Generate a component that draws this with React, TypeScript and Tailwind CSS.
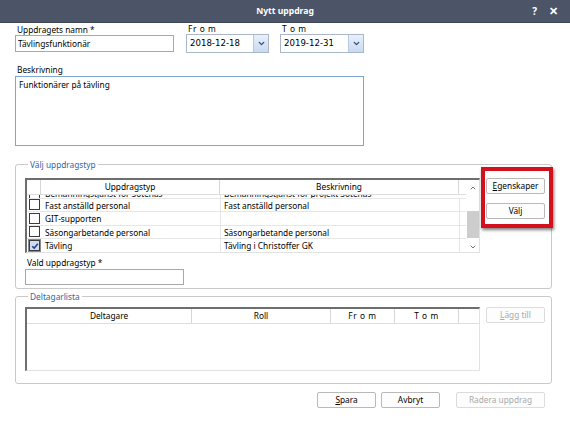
import { ChevronDown, ChevronUp } from "lucide-react";

// --- small building blocks ---

function Btn({ children, disabled, className = "" }: { children: React.ReactNode; disabled?: boolean; className?: string }) {
    return (
        <button
            className={`h-[16px] border rounded-[2px] flex items-center justify-center text-[8.3px] leading-none bg-[#fdfdfd] ${
                disabled ? "border-[#dcdcdc] text-[#a9a9a9]" : "border-[#b9b9b9] text-black"
            } ${className}`}
        >
            {children}
        </button>
    );
}

function DateField({ value }: { value: string }) {
    return (
        <div className="h-[19px] w-full border border-[#a9b7c9] bg-white flex items-center">
            <span className="flex-1 pl-[3px] text-[8.6px] font-['DejaVu_Sans']">{value}</span>
            <span className="w-[15px] h-[17px] bg-gradient-to-b from-[#e8f0fb] to-[#c9daf0] border-l border-[#b7c8de] flex items-center justify-center">
                <ChevronDown className="w-[9px] h-[9px] text-[#2c4a7a]" strokeWidth={3.5} />
            </span>
        </div>
    );
}

function Check({ checked }: { checked?: boolean }) {
    return (
        <span
            className={`w-[11px] h-[11px] border flex items-center justify-center ${
                checked ? "border-[#3b3b3b] bg-[#cfdcf2] outline outline-1 outline-[#8a8a8a]" : "border-[#3b3b3b] bg-white"
            }`}
        >
            {checked && (
                <svg viewBox="0 0 10 10" className="w-[8px] h-[8px]">
                    <path d="M1.5 5.2 L4 7.6 L8.6 2.2" fill="none" stroke="#1f3f8a" strokeWidth="1.8" />
                </svg>
            )}
        </span>
    );
}

const rows = [
    { name: "Fast anställd personal", desc: "Fast anställd personal" },
    { name: "GIT-supporten", desc: "" },
    { name: "Säsongarbetande personal", desc: "Säsongarbetande personal" },
    { name: "Tävling", desc: "Tävling i Christoffer GK", checked: true },
];

export default function App() {
    return (
        <div className="w-[570px] h-[421px] bg-white font-['Noto_Sans',sans-serif] text-[8.3px] text-black overflow-hidden relative">
            {/* Title bar */}
            <div className="h-[23px] bg-[#4b5567] border-b border-[#3e4757] flex items-center relative">
                <span className="flex-1 text-center text-white font-bold text-[8.6px]">Nytt uppdrag</span>
                <span className="absolute right-[33px] text-white font-bold text-[10px]">?</span>
                <span className="absolute right-[12px] text-white font-bold text-[11px]">✕</span>
            </div>

            <div className="px-[15px]">
                {/* Name + dates */}
                <div className="flex mt-[1px]">
                    <div className="w-[159px] flex flex-col">
                        <label className="h-[11px] leading-[11px] pl-[2px]">Uppdragets namn *</label>
                        <div className="h-[17px] border border-[#a8a8a8] bg-white pl-[2px] leading-[15px]">Tävlingsfunktionär</div>
                    </div>
                    <div className="w-[83px] ml-[12px] flex flex-col">
                        <label className="h-[10px] leading-[10px] pl-[2px] tracking-[0.6px]">Fr o m</label>
                        <DateField value="2018-12-18" />
                    </div>
                    <div className="w-[84px] ml-[11px] flex flex-col">
                        <label className="h-[10px] leading-[10px] pl-[2px] tracking-[0.6px]">T o m</label>
                        <DateField value="2019-12-31" />
                    </div>
                </div>

                {/* Beskrivning */}
                <div className="mt-[10px] h-[13px] leading-[13px] pl-[2px]">Beskrivning</div>
                <div className="w-[349px] h-[70px] border border-[#7fa7d1] bg-white px-[3px] pt-[1px] leading-[13px]">
                    Funktionärer på tävling
                </div>

                {/* Välj uppdragstyp */}
                <fieldset className="mt-[12px] border border-[#c9c9c9] rounded-[3px] h-[131px] w-[537px] pl-[9px]">
                    <legend className="ml-[3px] px-[2px] text-[#2f67a8] leading-[13px]">Välj uppdragstyp</legend>
                    <div className="flex mt-[7px]">
                        <div className="w-[455px] h-[75px] border-t-2 border-l-2 border-[#6e6e6e] border-r border-b border-r-[#e2e2e2] border-b-[#e2e2e2] flex bg-white">
                            <div className="flex-1 flex flex-col">
                                <div className="h-[15px] flex border-b border-[#dedede]">
                                    <div className="w-[14px] border-r border-[#d6d6d6]" />
                                    <div className="w-[179px] border-r border-[#d6d6d6] text-center leading-[14px]">Uppdragstyp</div>
                                    <div className="w-[239px] border-r border-[#d6d6d6] text-center leading-[14px]">Beskrivning</div>
                                    <div className="flex-1" />
                                </div>
                                {/* partially scrolled row */}
                                <div className="h-[5px] overflow-hidden border-b border-[#e6e6e6]">
                                    <div className="flex items-center h-[13px] -mt-[8px]">
                                        <div className="w-[15px] flex justify-center"><Check /></div>
                                        <div className="w-[179px] pl-[3px] border-r border-[#e6e6e6] leading-[13px]">Bemanningstjänst för Sotenäs</div>
                                        <div className="pl-[3px] leading-[13px]">Bemanningstjänst för projekt Sotenäs</div>
                                    </div>
                                </div>
                                {rows.map(r => (
                                    <div key={r.name} className="h-[13.5px] flex items-center border-b border-[#e6e6e6] last:border-b-0">
                                        <div className="w-[15px] flex justify-center"><Check checked={r.checked} /></div>
                                        <div className="w-[179px] h-full pl-[3px] border-r border-[#e6e6e6] leading-[13px] whitespace-nowrap">{r.name}</div>
                                        <div className="w-[239px] h-full pl-[3px] border-r border-[#e6e6e6] leading-[13px] whitespace-nowrap">{r.desc}</div>
                                    </div>
                                ))}
                            </div>
                            {/* scrollbar */}
                            <div className="w-[13px] flex flex-col items-center bg-white">
                                <ChevronUp className="w-[8px] h-[8px] mt-[4px] text-[#555]" strokeWidth={2.5} />
                                <div className="w-[12px] h-[27px] bg-[#cdcdcd] mt-[19px]" />
                                <ChevronDown className="w-[8px] h-[8px] mt-[5px] text-[#555]" strokeWidth={2.5} />
                            </div>
                        </div>
                        <div className="ml-[6px] flex flex-col gap-[9px]">
                            <Btn className="w-[59px]"><span><u>E</u>genskaper</span></Btn>
                            <Btn className="w-[59px]"><span>Väl<u>j</u></span></Btn>
                        </div>
                    </div>
                    <div className="mt-[4px] pl-[2px] leading-[12px]">Vald uppdragstyp *</div>
                    <div className="w-[159px] h-[16px] border border-[#a8a8a8] bg-white" />
                </fieldset>

                {/* Red annotation frame */}
                <div className="absolute left-[481px] top-[167px] w-[72px] h-[61px] border-4 border-[#d3101b] shadow-[1px_2px_3px_rgba(0,0,0,0.5)]" />

                {/* Deltagarlista */}
                <fieldset className="mt-[1px] border border-[#c9c9c9] rounded-[3px] h-[94px] w-[537px] pl-[9px]">
                    <legend className="ml-[3px] px-[2px] text-[#2f67a8] leading-[13px]">Deltagarlista</legend>
                    <div className="flex mt-[4px]">
                        <div className="w-[455px] h-[64px] border-t-2 border-l-2 border-[#6e6e6e] border-r border-b border-r-[#e2e2e2] border-b-[#e2e2e2] bg-white">
                            <div className="h-[15px] flex border-b border-[#dedede] leading-[14px]">
                                <div className="w-[165px] border-r border-[#d6d6d6] text-center">Deltagare</div>
                                <div className="w-[139px] border-r border-[#d6d6d6] text-center">Roll</div>
                                <div className="w-[64px] border-r border-[#d6d6d6] text-center tracking-[0.6px]">Fr o m</div>
                                <div className="w-[64px] border-r border-[#d6d6d6] text-center tracking-[0.6px]">T o m</div>
                                <div className="flex-1" />
                            </div>
                        </div>
                        <div className="ml-[6px]">
                            <Btn disabled className="w-[59px]"><span><u>L</u>ägg till</span></Btn>
                        </div>
                    </div>
                </fieldset>

                {/* Bottom buttons */}
                <div className="flex mt-[8px] pl-[302px]">
                    <Btn className="w-[59px]"><span><u>S</u>para</span></Btn>
                    <Btn className="w-[59px] ml-[5px]">Avbryt</Btn>
                    <Btn disabled className="w-[89px] ml-[16px]">Radera uppdrag</Btn>
                </div>
            </div>
        </div>
    );
}
